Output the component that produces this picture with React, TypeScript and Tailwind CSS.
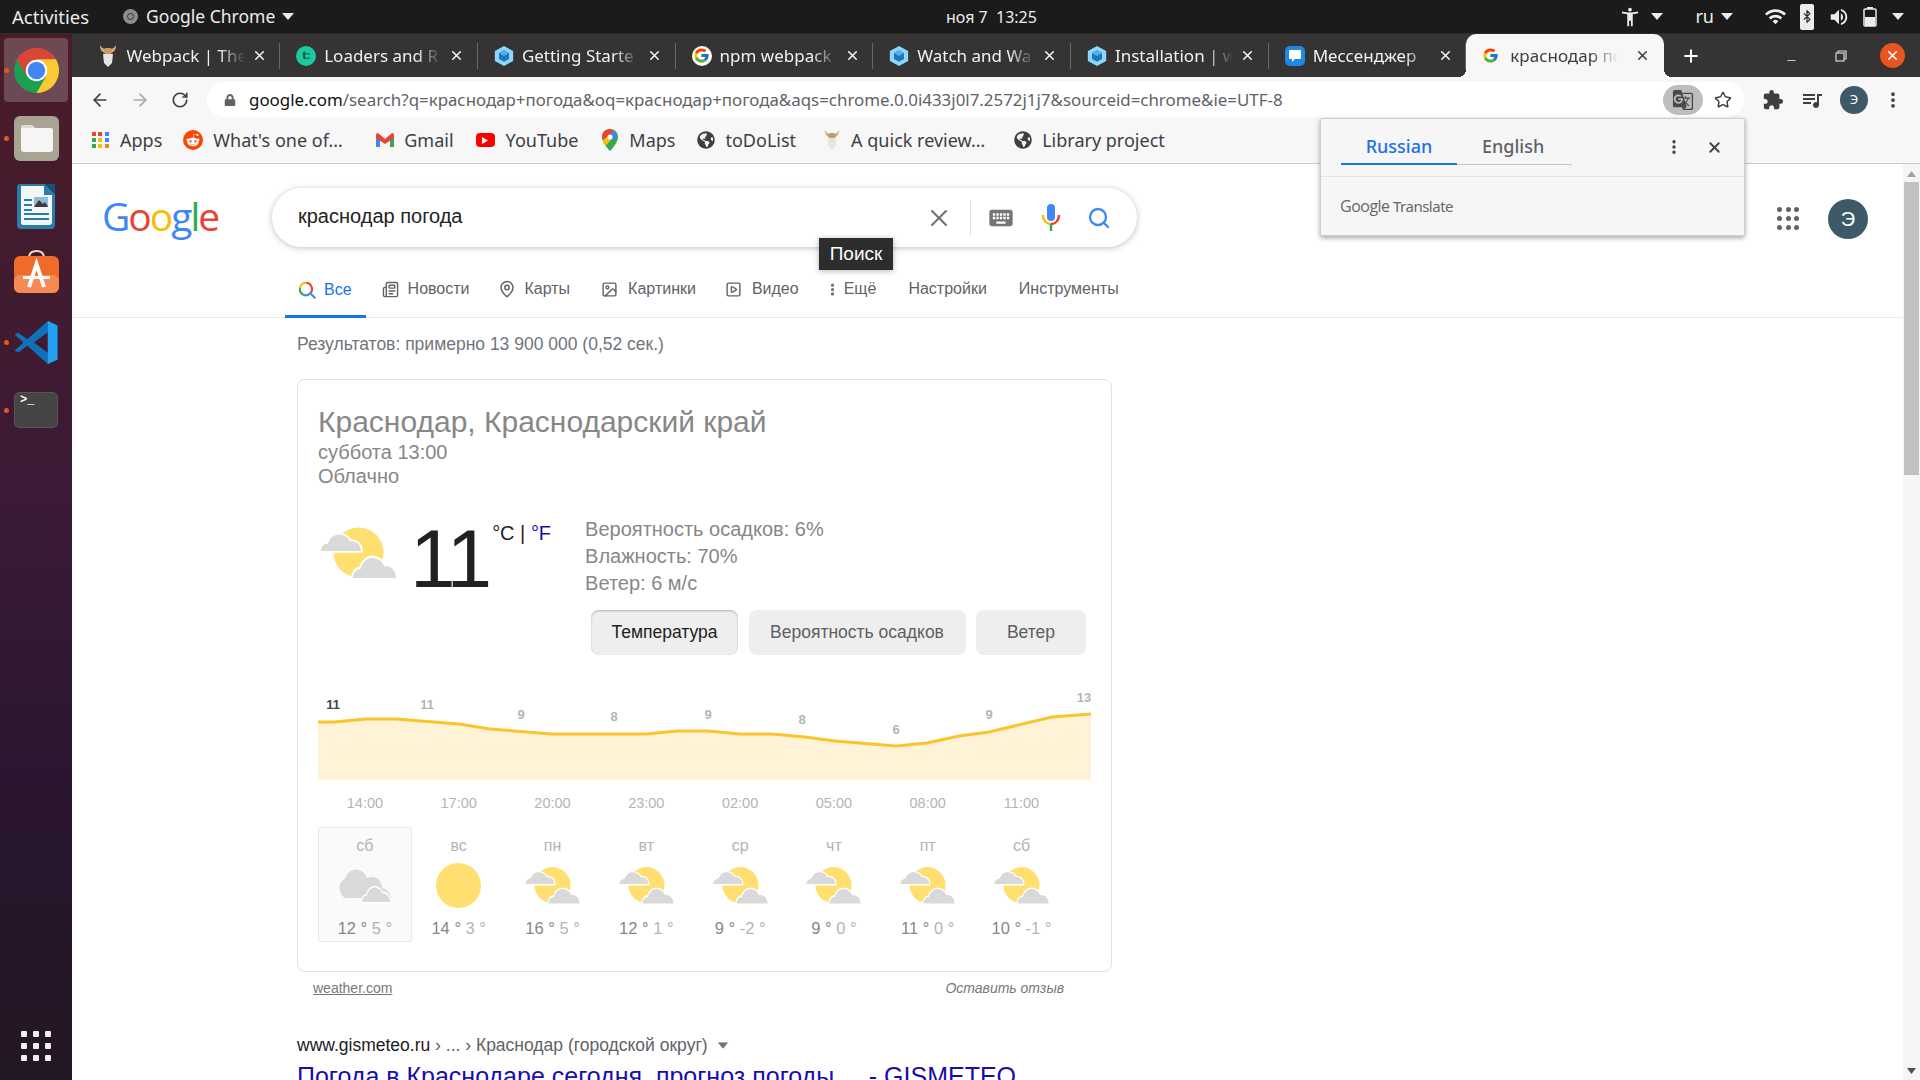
import type { ReactNode } from "react";
import { ArrowLeft, ArrowRight, Bluetooth, EllipsisVertical, Image, MapPin, Minus, Newspaper, Plus, RotateCw, Search, SquarePlay, Star, X } from "lucide-react";
import { FaGlobeAmericas, FaLock, FaRedditAlien } from "react-icons/fa";
import { FcGoogle } from "react-icons/fc";
import { MdAccessibilityNew, MdExtension, MdGTranslate, MdKeyboard, MdQueueMusic, MdVolumeUp, MdWifi } from "react-icons/md";

function Caret({ className = "" }: { className?: string }) {
  return (
    <svg width="12" height="7" viewBox="0 0 12 7" className={className}>
      <polygon points="0,0 12,0 6,7" fill="currentColor" />
    </svg>
  );
}

function ChromeLogo({ size }: { size: number }) {
  return (
    <svg width={size} height={size} viewBox="2 2 44 44">
      <circle cx="24" cy="24" r="22" fill="#1e9e50" />
      <path d="M4.95 13 A22 22 0 0 1 43.05 13 L24 13 L24 24 L14.5 29.5 Z" fill="#db4437" />
      <path d="M43.05 13 A22 22 0 0 1 24 46 L33.5 29.5 L24 24 L24 13 Z" fill="#fcc934" />
      <circle cx="24" cy="24" r="10.5" fill="#fff" />
      <circle cx="24" cy="24" r="8.5" fill="#4285f4" />
    </svg>
  );
}

function WebpackIcon() {
  return (
    <svg width="20" height="22" viewBox="0 0 24 26">
      <polygon points="12,1 23,7 23,19 12,25 1,19 1,7" fill="#8ed6fb" />
      <polygon points="12,6 18,9.5 18,16.5 12,20 6,16.5 6,9.5" fill="#1c78c0" />
      <polygon points="12,6 18,9.5 12,13 6,9.5" fill="#5aaee0" />
    </svg>
  );
}

function VikingIcon() {
  return (
    <svg width="18" height="24" viewBox="0 0 18 24">
      <path d="M1 1 C1 6 3 8 6 9 L12 9 C15 8 17 6 17 1 C15 4 13 5 12 5 L6 5 C5 5 3 4 1 1Z" fill="#d9ad7c" />
      <rect x="5" y="4" width="8" height="6" rx="2" fill="#c99a64" />
      <path d="M4 10 H14 L13 19 L9 23 L5 19Z" fill="#e4e4e4" />
    </svg>
  );
}

function GoogleFavicon() {
  return (
    <span className="flex h-5 w-5 items-center justify-center rounded-full bg-white">
      <FcGoogle size={17} />
    </span>
  );
}

function Teal() {
  return (
    <span className="flex h-5 w-5 items-center justify-center rounded-full bg-[#1dc9a0] text-[11px] font-bold text-[#15513f]">t:</span>
  );
}

function MessengerIcon() {
  return (
    <span className="flex h-5 w-5 items-center justify-center rounded-[5px] bg-[#1e88e5]">
      <svg width="14" height="14" viewBox="0 0 14 14">
        <path d="M2 1 H12 A1 1 0 0 1 13 2 V9 A1 1 0 0 1 12 10 H7 L4 13 V10 H2 A1 1 0 0 1 1 9 V2 A1 1 0 0 1 2 1Z" fill="#fff" />
      </svg>
    </span>
  );
}

const tabs: { title: string; icon: ReactNode }[] = [
  { title: "Webpack | The", icon: <VikingIcon /> },
  { title: "Loaders and R", icon: <Teal /> },
  { title: "Getting Starte", icon: <WebpackIcon /> },
  { title: "npm webpack", icon: <GoogleFavicon /> },
  { title: "Watch and Wa", icon: <WebpackIcon /> },
  { title: "Installation | w", icon: <WebpackIcon /> },
  { title: "Мессенджер", icon: <MessengerIcon /> },
];

function TabBar() {
  return (
    <div className="flex h-[43px] items-end bg-[#353334] pl-[10.5px] text-[17px]">
      {tabs.map((t) => (
        <div key={t.title} className="relative flex h-[43px] w-[197.7px] items-center pl-[16px] text-[#f1f1f1]">
          <span className="flex w-[28px] shrink-0 items-center">{t.icon}</span>
          <span className="w-[118px] overflow-hidden whitespace-nowrap [mask-image:linear-gradient(to_right,black_78%,transparent)]">{t.title}</span>
          <X size={15} strokeWidth={2.5} className="ml-[7px] text-[#f1f1f1]" />
          <span className="absolute top-[9px] right-0 h-[26px] w-px bg-[#6a6869]" />
        </div>
      ))}
      <div className="relative flex h-[43px] w-[198px] items-center rounded-t-[10px] bg-[#f7f7f7] pl-[16px] text-[#3c4043]">
        <span className="absolute bottom-0 -left-2 h-2 w-2 bg-[radial-gradient(circle_at_0_0,transparent_8px,#f7f7f7_8px)]" />
        <span className="absolute -right-2 bottom-0 h-2 w-2 bg-[radial-gradient(circle_at_100%_0,transparent_8px,#f7f7f7_8px)]" />
        <span className="flex w-[28px] shrink-0 items-center">
          <FcGoogle size={17} />
        </span>
        <span className="w-[118px] overflow-hidden whitespace-nowrap [mask-image:linear-gradient(to_right,black_68%,transparent_92%)]">краснодар погода</span>
        <X size={15} strokeWidth={2.5} className="ml-[7px] text-[#3c4043]" />
      </div>
      <Plus size={20} strokeWidth={2.5} className="mb-[11px] ml-[17px] text-white" />
      <Minus size={13} strokeWidth={2} className="mb-[10px] ml-[84px] text-[#c9c9c9]" />
      <svg width="12" height="12" viewBox="0 0 12 12" className="mb-[15px] ml-[37px]">
        <rect x="1" y="3" width="8" height="8" fill="none" stroke="#d8d8d8" strokeWidth="1.2" />
        <path d="M3 3 V1 H11 V9 H9" fill="none" stroke="#d8d8d8" strokeWidth="1.2" />
      </svg>
      <span className="mb-[9px] ml-[33px] flex h-[25px] w-[25px] items-center justify-center rounded-full bg-[#e95420]">
        <X size={15} strokeWidth={2.5} className="text-white" />
      </span>
    </div>
  );
}

function Toolbar() {
  return (
    <div className="flex h-[43px] items-start bg-[#f7f7f7] pt-[5px] pl-[18px]">
      <div className="flex h-[35px] items-center text-[#5f6368]">
        <ArrowLeft size={20} strokeWidth={2} className="text-[#3c4043]" />
        <ArrowRight size={20} strokeWidth={2} className="ml-[20px] text-[#a8a8a8]" />
        <RotateCw size={18} strokeWidth={2.2} className="ml-[21px] text-[#3c4043]" />
      </div>
      <div className="ml-[18px] flex h-[35px] w-[1537px] items-center rounded-full bg-white pl-[17px] text-[16.9px] whitespace-nowrap">
        <FaLock size={12} className="text-[#5f6368]" />
        <span className="ml-[13px] w-[1417px] overflow-hidden">
          <span className="text-[#111]">google.com</span>
          <span className="text-[#5f6368]">/search?q=краснодар+погода&amp;oq=краснодар+погода&amp;aqs=chrome.0.0i433j0l7.2572j1j7&amp;sourceid=chrome&amp;ie=UTF-8</span>
        </span>
        <span className="-ml-[3px] flex h-[30px] w-[40px] items-center justify-center rounded-full bg-[#bdbdbd]">
          <MdGTranslate size={22} className="text-[#4a4a4a]" />
        </span>
        <Star size={18} strokeWidth={2} className="ml-[11px] text-[#3c4043]" />
      </div>
      <div className="flex h-[35px] items-center text-[#3c4043]">
        <MdExtension size={22} className="ml-[18px]" />
        <MdQueueMusic size={24} className="ml-[16px]" />
        <span className="ml-[16px] flex h-[28px] w-[28px] items-center justify-center rounded-full bg-[#3e5a68] text-[13px] text-white">Э</span>
        <EllipsisVertical size={20} strokeWidth={2.5} className="ml-[15px]" />
      </div>
    </div>
  );
}

function AppsIcon() {
  const colors = ["#ea4335", "#ea4335", "#4285f4", "#34a853", "#fbbc04", "#4285f4", "#34a853", "#fbbc04", "#ea8a35"];
  return (
    <span className="grid w-[17px] grid-cols-3 gap-[2px]">
      {colors.map((c, i) => (
        <span key={i} className="h-[4px] w-[4px]" style={{ backgroundColor: c }} />
      ))}
    </span>
  );
}

function BookmarksBar() {
  return (
    <div className="flex h-[44px] items-center border-b border-[#c9c9c9] bg-[#f7f7f7] pb-[3px] pl-[20px] text-[18px] whitespace-nowrap text-[#3c4043]">
      <AppsIcon />
      <span className="ml-[11px]">Apps</span>
      <span className="ml-[21px] flex h-5 w-5 items-center justify-center rounded-full bg-[#ff4500]">
        <FaRedditAlien size={14} className="text-white" />
      </span>
      <span className="ml-[10px] w-[140px] overflow-hidden">What's one of…</span>
      <svg width="18" height="14" viewBox="0 0 18 14" className="ml-[23px]">
        <path d="M0 2 V14 H4 V5Z" fill="#4285f4" />
        <path d="M18 2 V14 H14 V5Z" fill="#34a853" />
        <path d="M0 2 Q0 0 2 0 L9 6 L16 0 Q18 0 18 2 V5 L9 11 L0 5Z" fill="#ea4335" />
      </svg>
      <span className="ml-[10px]">Gmail</span>
      <span className="ml-[22px] flex h-[14px] w-[19px] items-center justify-center rounded-[4px] bg-[#f00]">
        <svg width="6" height="7" viewBox="0 0 6 7">
          <polygon points="0,0 6,3.5 0,7" fill="#fff" />
        </svg>
      </span>
      <span className="ml-[11px]">YouTube</span>
      <svg width="16" height="22" viewBox="0 0 16 22" className="ml-[24px]">
        <path d="M8 0 C3.6 0 0 3.6 0 8 C0 14 8 22 8 22 C8 22 16 14 16 8 C16 3.6 12.4 0 8 0Z" fill="#34a853" />
        <path d="M8 0 C3.6 0 0 3.6 0 8 C0 9 0.3 10 0.8 11 L12 2 C11 1 9.5 0 8 0Z" fill="#ea4335" />
        <path d="M12 2 L6 7 L10 11 L15 7 C15 5 14 3 12 2Z" fill="#4285f4" />
        <path d="M0.8 11 C1.5 13 3 15 4 16.5 L9 11 L5 8Z" fill="#fbbc04" />
        <circle cx="8" cy="8" r="2.6" fill="#fff" />
      </svg>
      <span className="ml-[11px]">Maps</span>
      <FaGlobeAmericas size={18} className="ml-[22px] text-[#3c4043]" />
      <span className="ml-[10px]">toDoList</span>
      <span className="ml-[28px] flex w-[16px] justify-center">
        <VikingIcon />
      </span>
      <span className="ml-[11px]">A quick review…</span>
      <FaGlobeAmericas size={18} className="ml-[29px] text-[#3c4043]" />
      <span className="ml-[10px]">Library project</span>
    </div>
  );
}

function TopBar() {
  return (
    <div className="relative flex h-[34px] items-center border-b border-[#2c2c2c] bg-[#1b1b1b] pl-[12px] text-[18px] whitespace-nowrap text-[#ececec]">
      <span className="text-[18.5px]">Activities</span>
      <span className="ml-[34px] flex h-[15px] w-[15px] items-center justify-center rounded-full bg-[#8d8d8d]">
        <span className="h-[7px] w-[7px] rounded-full border border-[#333]" />
      </span>
      <span className="ml-[8px] text-[17.5px]">Google Chrome</span>
      <Caret className="ml-[7px]" />
      <span className="absolute left-[946px] text-[16px]">ноя 7&nbsp;&nbsp;13:25</span>
      <div className="ml-auto flex items-center pr-[16px]">
        <MdAccessibilityNew size={22} />
        <Caret className="ml-[10px]" />
        <span className="ml-[32px]">ru</span>
        <Caret className="ml-[7px]" />
        <MdWifi size={23} className="ml-[31px]" />
        <span className="ml-[13px] flex h-[26px] w-[14px] items-center justify-center rounded-[2px] bg-[#ececec]">
          <Bluetooth size={15} className="text-[#222]" />
        </span>
        <MdVolumeUp size={22} className="ml-[14px]" />
        <svg width="14" height="20" viewBox="0 0 14 20" className="ml-[13px]">
          <rect x="4" y="0" width="6" height="2" fill="#ececec" />
          <rect x="1" y="2" width="12" height="17" rx="1" fill="none" stroke="#ececec" strokeWidth="1.5" />
          <rect x="2" y="10" width="10" height="9" fill="#ececec" />
        </svg>
        <Caret className="ml-[15px]" />
      </div>
    </div>
  );
}

function DockSlot({ children, running = false, active = false }: { children: ReactNode; running?: boolean; active?: boolean }) {
  return (
    <div className="relative flex h-[68px] w-[72px] items-center justify-center">
      {active && <span className="absolute inset-x-[4px] top-[2px] h-[64px] rounded-[4px] bg-white/20" />}
      {running && <span className="absolute top-[32px] left-[4px] h-[5px] w-[5px] rounded-full bg-[#e95420]" />}
      <span className="relative">{children}</span>
    </div>
  );
}

function Dock() {
  return (
    <div className="flex w-[72px] shrink-0 flex-col bg-[linear-gradient(to_bottom,#4a1c28,#3a1a36_45%,#2a1630_70%,#231623)] pt-[2px]">
      <DockSlot running active>
        <ChromeLogo size={45} />
      </DockSlot>
      <DockSlot running>
        <svg width="45" height="45" viewBox="0 0 45 45">
          <rect width="45" height="45" rx="6" fill="#a9a391" />
          <path d="M7 12 Q7 9 10 9 H18 L21 12 H37 Q39 12 39 14 V33 Q39 36 36 36 H10 Q7 36 7 33Z" fill="#f6f5f3" />
          <path d="M7 12 Q7 9 10 9 H18 L21 12 H10Z" fill="#dedbd3" />
        </svg>
      </DockSlot>
      <DockSlot>
        <svg width="38" height="45" viewBox="0 0 38 45">
          <path d="M3 0 H28 L38 10 V41 Q38 45 34 45 H4 Q0 45 0 41 V3 Q0 0 3 0Z" fill="#2a7cac" />
          <path d="M4 2 H27 V11 H35 V38 Q35 41 32 41 H6 Q4 41 4 38Z" fill="#f4f7f9" />
          <polygon points="29,0 38,9 38,0" fill="#18537a" />
          <rect x="7" y="15" width="8" height="2" fill="#2a7cac" />
          <rect x="7" y="20" width="8" height="2" fill="#2a7cac" />
          <rect x="7" y="25" width="8" height="2" fill="#2a7cac" />
          <rect x="17" y="13" width="14" height="10" fill="#8fbdd8" />
          <polygon points="17,23 22,16 26,20 28,18 31,23" fill="#3a3a3a" />
          <rect x="7" y="29" width="25" height="2" fill="#2a7cac" />
          <rect x="7" y="34" width="25" height="2" fill="#2a7cac" />
        </svg>
      </DockSlot>
      <DockSlot>
        <svg width="45" height="44" viewBox="0 0 45 44" className="-mt-[4px]">
          <path d="M15 8 Q15 1 22.5 1 Q30 1 30 8" fill="none" stroke="#f6d9b8" strokeWidth="2" />
          <rect y="6" width="45" height="37" rx="6" fill="#f26a2a" />
          <rect y="25" width="45" height="18" rx="6" fill="#f58a52" />
          <path d="M15 37 L22.5 14 L30 37" fill="none" stroke="#fff" strokeWidth="4" />
          <rect x="9" y="26" width="27" height="3" fill="#fff" />
        </svg>
      </DockSlot>
      <DockSlot running>
        <svg width="44" height="44" viewBox="2 2 20 20.5">
          <path d="M17.5 2.5 L8 11 L3.7 7.9 L2 8.8 L6.2 12.5 L2 16.2 L3.7 17.1 L8 14 L17.5 22.5 L22 20.4 V4.6Z M17.5 7.7 V17.3 L11 12.5Z" fill="#0f72b8" />
          <path d="M17.5 2.5 L22 4.6 V20.4 L17.5 22.5Z" fill="#22a0f2" />
        </svg>
      </DockSlot>
      <DockSlot running>
        <span className="block h-[36px] w-[44px] rounded-[5px] border border-[#555] bg-[#454545] pl-[5px] font-['Liberation_Mono',monospace] text-[12px] leading-[15px] font-bold text-white">&gt;_</span>
      </DockSlot>
      <div className="mt-auto mb-[19px] ml-[21px] grid w-[30px] grid-cols-3 gap-[6px]">
        {[0, 1, 2, 3, 4, 5, 6, 7, 8].map((i) => (
          <span key={i} className="h-[6px] w-[6px] rounded-[1px] bg-[#eeeeee]" />
        ))}
      </div>
    </div>
  );
}

function Cloud({ x, y, w, h }: { x: number; y: number; w: number; h: number }) {
  return (
    <path
      transform={`translate(${x} ${y}) scale(${w / 40} ${h / 17})`}
      d="M0 17 C0 13 3 10 7 10 C9 4 15 0 21 2 C26 3 28 6 29 8 C35 7 40 11 40 17 Z"
      fill="#d9d9d9"
      stroke="#fff"
      strokeWidth="3.5"
      paintOrder="stroke"
    />
  );
}

function PartlyCloudy({ width, height }: { width: number; height: number }) {
  return (
    <svg width={width} height={height} viewBox="0 0 79 54">
      <circle cx="39.5" cy="26.5" r="25" fill="#ffdf70" />
      <Cloud x={2} y={7} w={40} h={18} />
      <Cloud x={34} y={30} w={43} h={22} />
    </svg>
  );
}

function Cloudy() {
  return (
    <svg width="54" height="36" viewBox="0 0 54 36">
      <path d="M2 22 C0 17 4 12 7 11 C9 3 17 -1 23 3 C27 5 28 8 29 10 C36 7 44 11 44 20 C48 21 53 25 53 30 H8 C5 30 3 26 2 22Z" fill="#d9d9d9" />
      <Cloud x={24} y={18} w={28} h={16} />
    </svg>
  );
}

function Sunny() {
  return <span className="block h-[45px] w-[45px] rounded-full bg-[#ffdf70]" />;
}

const days: { name: string; hi: string; lo: string; icon: ReactNode; selected?: boolean }[] = [
  { name: "сб", hi: "12", lo: "5", icon: <Cloudy />, selected: true },
  { name: "вс", hi: "14", lo: "3", icon: <Sunny /> },
  { name: "пн", hi: "16", lo: "5", icon: <PartlyCloudy width={57} height={39} /> },
  { name: "вт", hi: "12", lo: "1", icon: <PartlyCloudy width={57} height={39} /> },
  { name: "ср", hi: "9", lo: "-2", icon: <PartlyCloudy width={57} height={39} /> },
  { name: "чт", hi: "9", lo: "0", icon: <PartlyCloudy width={57} height={39} /> },
  { name: "пт", hi: "11", lo: "0", icon: <PartlyCloudy width={57} height={39} /> },
  { name: "сб", hi: "10", lo: "-1", icon: <PartlyCloudy width={57} height={39} /> },
];

const hours = ["14:00", "17:00", "20:00", "23:00", "02:00", "05:00", "08:00", "11:00"];

const linePts =
  "0,32 17,32 47,29 78,29 141,34 172,39 234,44 328,44 359,41 390,41 422,44 454,44 487,47 517,51 578,56 609,53 641,46 671,42 734,27 773,24";

const chartLabels = [
  { x: 15, y: 18.5, t: "11", dark: true },
  { x: 109, y: 18.5, t: "11" },
  { x: 203, y: 28.5, t: "9" },
  { x: 296, y: 30.5, t: "8" },
  { x: 390, y: 28.5, t: "9" },
  { x: 484, y: 33.5, t: "8" },
  { x: 578, y: 43.5, t: "6" },
  { x: 671, y: 28.5, t: "9" },
  { x: 766, y: 11.5, t: "13" },
];

function TempChart() {
  return (
    <svg width="773" height="90" viewBox="0 0 773 90" className="mt-[35px] block">
      <polygon points={`${linePts} 773,90 0,90`} fill="#fef3d6" />
      <polyline points={linePts} fill="none" stroke="#fcc32c" strokeWidth="3" />
      {chartLabels.map((l, i) => (
        <text key={i} x={l.x} y={l.y} textAnchor="middle" fontSize="13" fontWeight="700" fill={l.dark ? "#444" : "#b5b5b5"} fontFamily="Liberation Sans, sans-serif">
          {l.t}
        </text>
      ))}
    </svg>
  );
}

function WeatherCard() {
  return (
    <div className="mt-[25px] h-[593px] w-[815px] rounded-[8px] border border-[#dfe1e5] pt-[24px] pl-[20px]">
      <div className="text-[30px] leading-[36px] text-[#878787]">Краснодар, Краснодарский край</div>
      <div className="text-[20px] leading-[24px] text-[#878787]">суббота 13:00</div>
      <div className="text-[20px] leading-[24px] text-[#878787]">Облачно</div>
      <div className="mt-[27px] flex h-[81px] items-start">
        <span className="mt-[11px] ml-px">
          <PartlyCloudy width={79} height={54} />
        </span>
        <span className="ml-[12px] text-[82px] leading-[88px] tracking-[-3px] text-[#212121]">11</span>
        <span className="mt-[6px] ml-[3px] text-[20px] leading-[24px] text-[#212121]">
          °C | <span className="text-[#1a0dab]">°F</span>
        </span>
        <div className="mt-px ml-[34px] text-[20px] leading-[27px] text-[#878787]">
          <div>Вероятность осадков: 6%</div>
          <div>Влажность: 70%</div>
          <div>Ветер: 6 м/с</div>
        </div>
      </div>
      <div className="mt-[14px] flex justify-end gap-[10.5px] pr-[25px] text-[17.5px]">
        <span className="flex h-[45px] w-[147px] items-center justify-center rounded-[8px] bg-[#eeeeee] text-[#212121] shadow-[inset_0_1px_2px_rgba(0,0,0,0.25)]">Температура</span>
        <span className="flex h-[45px] w-[217px] items-center justify-center rounded-[8px] bg-[#eeeeee] text-[#5f5f5f]">Вероятность осадков</span>
        <span className="flex h-[45px] w-[110px] items-center justify-center rounded-[8px] bg-[#eeeeee] text-[#5f5f5f]">Ветер</span>
      </div>
      <TempChart />
      <div className="mt-[13px] flex text-[14.5px] leading-[20px] text-[#b4b4b4]">
        {hours.map((h) => (
          <span key={h} className="w-[93.8px] text-center">{h}</span>
        ))}
      </div>
      <div className="mt-[14px] flex">
        {days.map((d, i) => (
          <div key={i} className={`flex h-[115px] w-[93.8px] flex-col items-center rounded-[2px] pt-[8px] ${d.selected ? "border border-[#e9e9e9] bg-[#fafafa]" : "border border-transparent"}`}>
            <span className="text-[16px] leading-[20px] text-[#b4b4b4]">{d.name}</span>
            <span className="mt-[3px] flex h-[53px] items-center justify-center">{d.icon}</span>
            <span className="mt-[6px] text-[16.5px] leading-[20px] whitespace-nowrap text-[#878787]">
              {d.hi} ° <span className="text-[#b4b4b4]">{d.lo} °</span>
            </span>
          </div>
        ))}
      </div>
    </div>
  );
}

function GoogleWord() {
  return (
    <span className="-mt-[3px] w-[113px] font-['Open_Sans',sans-serif] text-[39px] leading-[46px] font-medium tracking-[-2px]">
      <span className="text-[#4285f4]">G</span>
      <span className="text-[#ea4335]">o</span>
      <span className="text-[#fbbc05]">o</span>
      <span className="text-[#4285f4]">g</span>
      <span className="text-[#34a853]">l</span>
      <span className="text-[#ea4335]">e</span>
    </span>
  );
}

function AllIcon() {
  return (
    <svg width="17" height="17" viewBox="0 0 24 24" fill="none" strokeWidth="3">
      <path d="M16 16 A9 9 0 0 0 10 1" stroke="#ea4335" />
      <path d="M10 1 A9 9 0 0 0 1.5 8" stroke="#fbbc05" />
      <path d="M1.5 8 A9 9 0 0 0 6 18" stroke="#34a853" />
      <path d="M6 18 A9 9 0 0 0 16 16 L23 23" stroke="#4285f4" />
    </svg>
  );
}

function NavTabs() {
  return (
    <div className="flex h-[71px] items-end border-b border-[#ebebeb] pl-[213px] text-[16px] text-[#5f6368]">
      <span className="-mb-px flex h-[40px] items-start border-b-[3px] border-[#1a73e8] pr-[14px] pl-[14px] text-[#1a73e8]">
        <span className="flex items-center gap-[8px]"><AllIcon />Все</span>
      </span>
      <span className="mb-[16px] ml-[16px] flex items-center gap-[9px]"><Newspaper size={17} />Новости</span>
      <span className="mb-[16px] ml-[28px] flex items-center gap-[9px]"><MapPin size={18} />Карты</span>
      <span className="mb-[16px] ml-[31px] flex items-center gap-[10px]"><Image size={17} />Картинки</span>
      <span className="mb-[16px] ml-[29px] flex items-center gap-[10px]"><SquarePlay size={17} />Видео</span>
      <span className="mb-[16px] ml-[26px] flex items-center gap-[4px]"><EllipsisVertical size={15} strokeWidth={3} />Ещё</span>
      <span className="mb-[16px] ml-[32px]">Настройки</span>
      <span className="mb-[16px] ml-[32px]">Инструменты</span>
    </div>
  );
}

function GooglePage() {
  return (
    <div className="relative flex min-w-0 flex-1 bg-white font-['Liberation_Sans',sans-serif]">
      <div className="h-[916px] min-w-0 flex-1 overflow-hidden">
        <div className="flex items-center pt-[24px] pl-[30px]">
          <GoogleWord />
          <div className="ml-[57px] flex h-[59px] w-[865px] items-center rounded-full bg-white pl-[26px] text-[20px] text-[#222] shadow-[0_1px_6px_rgba(32,33,36,0.28)]">
            <span className="-mt-[3px]">краснодар погода</span>
            <X size={28} strokeWidth={1.8} className="ml-[463px] text-[#70757a]" />
            <span className="ml-[17px] h-[36px] w-px bg-[#dfe1e5]" />
            <MdKeyboard size={28} className="ml-[16px] text-[#757575]" />
            <svg width="20" height="27" viewBox="0 0 20 27" className="ml-[26px]">
              <rect x="6" y="0" width="8" height="17" rx="4" fill="#4285f4" />
              <path d="M2 11 C2 17 6 20 10 20" fill="none" stroke="#fbbc05" strokeWidth="2.4" />
              <path d="M18 11 C18 17 14 20 10 20" fill="none" stroke="#ea4335" strokeWidth="2.4" />
              <rect x="8.8" y="20" width="2.4" height="7" fill="#34a853" />
            </svg>
            <Search size={24} strokeWidth={2.3} className="ml-[26px] text-[#4285f4]" />
          </div>
          <div className="mt-px ml-[640px] grid w-[22px] grid-cols-3 gap-[4px]">
            {[0, 1, 2, 3, 4, 5, 6, 7, 8].map((i) => (
              <span key={i} className="h-[5px] w-[5px] rounded-full bg-[#5f6368]" />
            ))}
          </div>
          <span className="mt-[2px] ml-[29px] flex h-[40px] w-[40px] items-center justify-center rounded-full bg-[#3e5a68] text-[20px] text-white">Э</span>
        </div>
        <NavTabs />
        <div className="ml-[225px]">
          <div className="pt-[16px] text-[17.5px] leading-[20px] text-[#70757a]">Результатов: примерно 13 900 000 (0,52 сек.)</div>
          <WeatherCard />
          <div className="mt-[7px] ml-[16px] flex w-[751px] justify-between text-[14px] leading-[18px]">
            <span className="text-[#777] underline">weather.com</span>
            <span className="text-[#777] italic">Оставить отзыв</span>
          </div>
          <div className="mt-[36px] flex items-center text-[17.5px] leading-[24px] text-[#5f6368]">
            <span className="text-[#202124]">www.gismeteo.ru</span>
            <span>&nbsp;› ... › Краснодар (городской округ)</span>
            <Caret className="ml-[9px] scale-90 text-[#70757a]" />
          </div>
          <div className="mt-[4px] text-[25px] leading-[30px] whitespace-nowrap text-[#1a0dab]">Погода в Краснодаре сегодня, прогноз погоды ... - GISMETEO</div>
        </div>
      </div>
      <div className="flex w-[17px] shrink-0 flex-col items-center bg-[#f5f5f5]">
        <svg width="9" height="6" viewBox="0 0 9 6" className="mt-[7px]">
          <polygon points="4.5,0 9,6 0,6" fill="#a3a3a3" />
        </svg>
        <span className="mt-[5px] h-[293px] w-[15px] bg-[#c1c1c1]" />
        <svg width="9" height="6" viewBox="0 0 9 6" className="mt-auto mb-[6px]">
          <polygon points="0,0 9,0 4.5,6" fill="#505050" />
        </svg>
      </div>
    </div>
  );
}

function TranslatePopup() {
  return (
    <div className="absolute top-[118px] left-[1320px] h-[118px] w-[425px] rounded-[2px] border border-[#d0d0d0] bg-[#f6f6f6] font-['Noto_Sans',sans-serif] shadow-[0_2px_5px_rgba(0,0,0,0.35)]">
      <div className="flex h-[58px] items-end border-b border-[#e4e4e4] pb-[11px] pl-[20px]">
        <div className="flex w-[231px] border-b border-[#c4c4c4] text-[18px] leading-[33px] font-medium">
          <span className="-mb-px w-[116px] border-b-2 border-[#1a73e8] text-center text-[#1a73e8]">Russian</span>
          <span className="ml-[25px] text-[#5f6368]">English</span>
        </div>
        <EllipsisVertical size={18} strokeWidth={2.5} className="mb-[9px] ml-[93px] text-[#3c4043]" />
        <X size={17} strokeWidth={2.5} className="mb-[9px] ml-[23px] text-[#3c4043]" />
      </div>
      <div className="pt-[19px] pl-[19px] text-[15px] leading-[20px] tracking-[-0.5px] text-[#666]">
        <span className="font-['Open_Sans',sans-serif] text-[16px]">Google</span> Translate
      </div>
    </div>
  );
}

export default function App() {
  return (
    <div className="relative flex h-[1080px] w-[1920px] flex-col overflow-hidden font-['Noto_Sans',sans-serif]">
      <TopBar />
      <div className="flex min-h-0 flex-1">
        <Dock />
        <div className="flex min-w-0 flex-1 flex-col">
          <TabBar />
          <Toolbar />
          <BookmarksBar />
          <GooglePage />
        </div>
      </div>
      <TranslatePopup />
      <div className="absolute top-[238px] left-[819px] flex h-[32px] w-[74px] items-center justify-center bg-[#2d2d2d] font-['Liberation_Sans',sans-serif] text-[19px] text-white shadow-[0_1px_6px_rgba(0,0,0,0.3)]">Поиск</div>
    </div>
  );
}
